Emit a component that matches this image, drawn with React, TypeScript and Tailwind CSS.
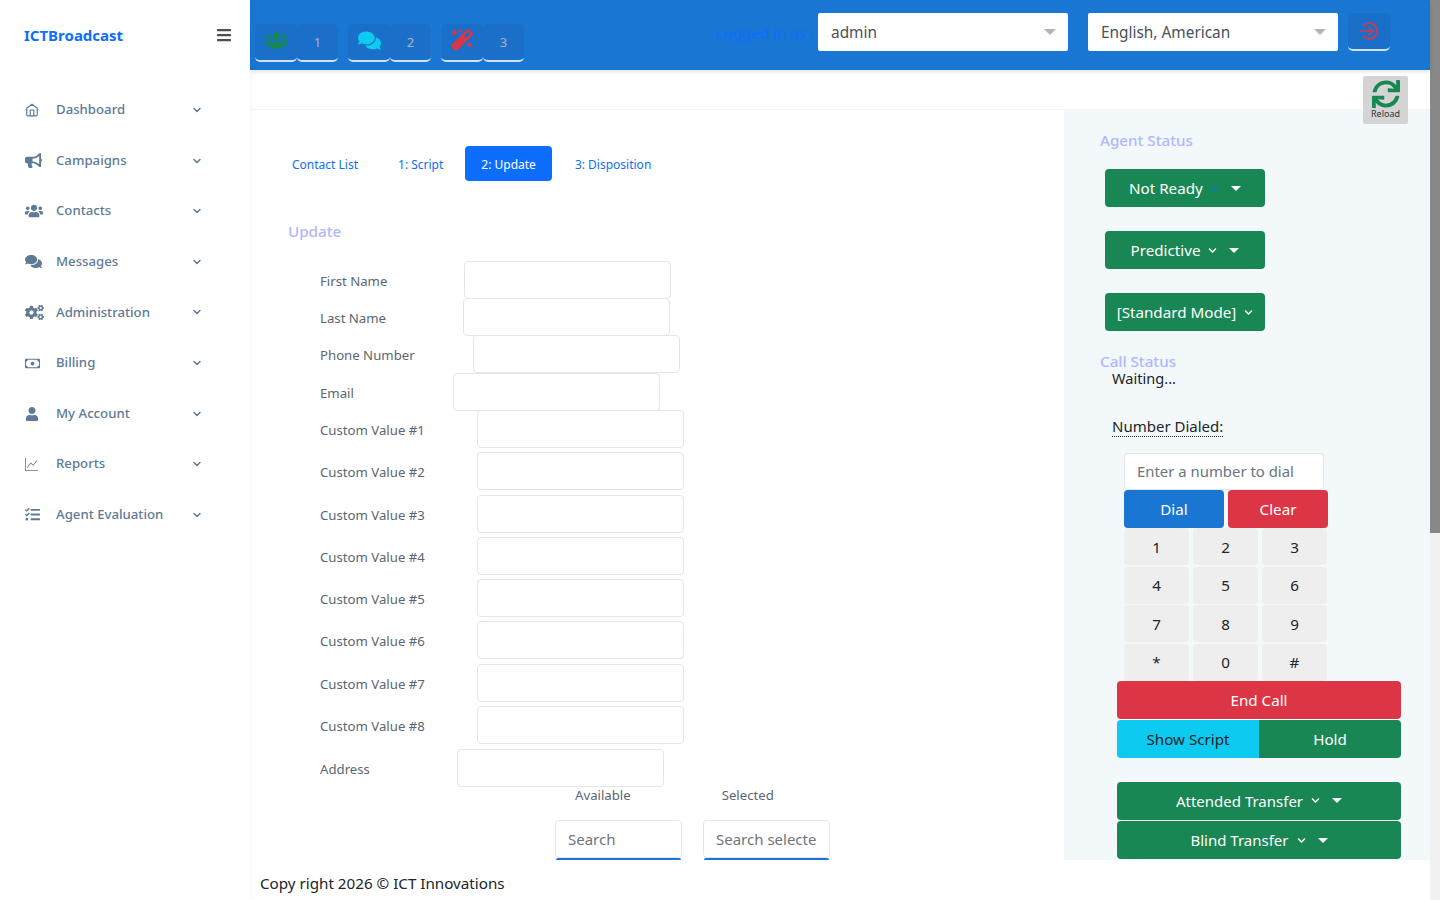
import { FaUsers, FaComments, FaMagic, FaBullhorn, FaCogs, FaUser, FaSync, FaTasks, FaBars, FaChevronDown } from 'react-icons/fa'
import { FiHome, FiChevronDown } from 'react-icons/fi'
import { BsCash, BsGraphUp } from 'react-icons/bs'
import { ReactNode } from 'react'

const font = "font-['Noto_Sans',sans-serif]"

const menu: { label: string; icon: ReactNode }[] = [
  { label: 'Dashboard', icon: <FiHome className="text-[14px]" /> },
  { label: 'Campaigns', icon: <FaBullhorn className="text-[17px]" /> },
  { label: 'Contacts', icon: <FaUsers className="text-[18px]" /> },
  { label: 'Messages', icon: <FaComments className="text-[17px]" /> },
  { label: 'Administration', icon: <FaCogs className="text-[19px]" /> },
  { label: 'Billing', icon: <BsCash className="text-[15px]" /> },
  { label: 'My Account', icon: <FaUser className="text-[14px]" /> },
  { label: 'Reports', icon: <BsGraphUp className="text-[13px]" /> },
  { label: 'Agent Evaluation', icon: <FaTasks className="text-[15px]" /> },
]

// offsets are uneven in the page itself
const fields: { label: string; ml: string; rowH: string }[] = [
  { label: 'First Name', ml: 'ml-[49px]', rowH: 'h-[37px]' },
  { label: 'Last Name', ml: 'ml-[48px]', rowH: 'h-[37px]' },
  { label: 'Phone Number', ml: 'ml-[58px]', rowH: 'h-[38px]' },
  { label: 'Email', ml: 'ml-[38px]', rowH: 'h-[37px]' },
  { label: 'Custom Value #1', ml: 'ml-[62px]', rowH: 'h-[42px]' },
  { label: 'Custom Value #2', ml: 'ml-[62px]', rowH: 'h-[43px]' },
  { label: 'Custom Value #3', ml: 'ml-[62px]', rowH: 'h-[42px]' },
  { label: 'Custom Value #4', ml: 'ml-[62px]', rowH: 'h-[42px]' },
  { label: 'Custom Value #5', ml: 'ml-[62px]', rowH: 'h-[42px]' },
  { label: 'Custom Value #6', ml: 'ml-[62px]', rowH: 'h-[43px]' },
  { label: 'Custom Value #7', ml: 'ml-[62px]', rowH: 'h-[42px]' },
  { label: 'Custom Value #8', ml: 'ml-[62px]', rowH: 'h-[43px]' },
  { label: 'Address', ml: 'ml-[42px]', rowH: 'h-[38px]' },
]

function Caret() {
  return <span className="inline-block w-0 h-0 border-x-[5px] border-x-transparent border-t-[5px] border-t-white" />
}

function Sidebar() {
  return (
    <aside className="w-[250px] shrink-0 bg-white flex flex-col relative z-20 shadow-[0_0_8px_rgba(0,0,0,0.05)]">
      <div className="h-[70px] flex items-center justify-between pl-[24px] pr-[18px]">
        <span className="text-[15px] font-bold text-[#0d6efd]">ICTBroadcast</span>
        <FaBars className="text-[#495057] text-[16px]" />
      </div>
      <ul className="mt-[14.8px] flex flex-col">
        {menu.map((m) => (
          <li key={m.label} className="h-[50.6px] flex items-center pl-[25px] pr-[47px] text-[#5e7a94] text-[13.2px] font-medium">
            <span className="w-[31px] flex items-center">{m.icon}</span>
            <span className="flex-1">{m.label}</span>
            <FiChevronDown className="text-[12px] stroke-[3px]" />
          </li>
        ))}
      </ul>
    </aside>
  )
}

function TopBtn({ icon, n }: { icon: ReactNode; n: number }) {
  return (
    <div className="flex h-[38px] text-[#a9b4c2] text-[13px]">
      <div className="w-[42px] bg-[#1a6fc9] rounded-[5px] border-b-[2px] border-[#cfe2f7] flex items-start justify-center pt-[5px]">{icon}</div>
      <div className="w-[41px] bg-[#1a6fc9] rounded-[5px] border-b-[2px] border-[#cfe2f7] flex items-center justify-center pt-[2px]">{n}</div>
    </div>
  )
}

function TopSelect({ value }: { value: string }) {
  return (
    <div className="w-[250px] h-[38px] bg-white rounded-[2px] flex items-center justify-between pl-[13px] pr-[12px] text-[#495057] text-[15.4px]">
      <span className="pt-[2px]">{value}</span>
      <span className="w-0 h-0 border-x-[6px] border-x-transparent border-t-[6px] border-t-[#adb5bd]" />
    </div>
  )
}

function LogoutIcon() {
  return (
    <svg viewBox="0 0 24 24" className="w-[20px] h-[20px] text-[#dc3545]" fill="none" stroke="currentColor" strokeWidth="2" strokeLinecap="round" strokeLinejoin="round">
      <path d="M5.5 5.5a9.5 9.5 0 1 1 0 13" />
      <path d="M2 12h14" />
      <path d="M12 7.5l4.5 4.5-4.5 4.5" />
    </svg>
  )
}

function Header() {
  return (
    <header className="h-[70px] shrink-0 bg-[#1976d2] shadow-[0_2px_4px_rgba(0,0,0,0.1)] flex items-start relative z-10">
      <div className="flex gap-[10px] ml-[5px] mt-[24px]">
        <TopBtn icon={<FaUsers className="text-[#198754] text-[23px]" />} n={1} />
        <TopBtn icon={<FaComments className="text-[#0dcaf0] text-[23px]" />} n={2} />
        <TopBtn icon={<FaMagic className="text-[#dc3545] text-[22px]" />} n={3} />
      </div>
      <span className="ml-[191px] mt-[21px] text-[15.2px] text-[#0d6efd] leading-[24px] w-[103px] whitespace-nowrap">Logged in as :</span>
      <div className="flex gap-[20px] mt-[13px]">
        <TopSelect value="admin" />
        <TopSelect value="English, American" />
      </div>
      <div className="ml-[10px] mt-[13px] w-[42px] h-[38px] bg-[#1a6fc9] rounded-[5px] border-b-[2px] border-[#cfe2f7] flex items-center justify-center">
        <LogoutIcon />
      </div>
    </header>
  )
}

function FormArea() {
  return (
    <section className="w-[814px] shrink-0 bg-white rounded-tr-[6px] pt-[36px] text-[13.2px] text-[#5c6670]">
      <div className="flex items-center h-[35px] ml-[26px] text-[#0d6efd] text-[12px]">
        <span className="px-[16px] pt-[2px]">Contact List</span>
        <span className="px-[16px] pt-[2px] ml-[8px]">1: Script</span>
        <span className="px-[16px] pt-[2px] ml-[6px] h-[35px] flex items-center bg-[#0d6efd] text-white rounded-[4px]">2: Update</span>
        <span className="px-[16px] pt-[2px] ml-[7px]">3: Disposition</span>
      </div>
      <h5 className="ml-[38px] mt-[38px] text-[15.2px] font-medium text-[#b1b6ff] leading-[24px]">Update</h5>
      <div className="mt-[17.5px]">
        {fields.map((f) => (
          <div key={f.label} className={`flex items-start pl-[70px] ${f.rowH}`}>
            <span className="w-[95px] whitespace-nowrap leading-[41px]">{f.label}</span>
            <div className={`w-[207px] h-[38px] shrink-0 bg-white border border-[#e4e7ea] rounded-[4px] ${f.ml}`} />
          </div>
        ))}
      </div>
      <div className="flex mt-[-1px] ml-[325px] gap-[91px]">
        <span>Available</span>
        <span>Selected</span>
      </div>
      <div className="flex mt-[15px] ml-[305px] gap-[21px]">
        {['Search', 'Search selected'].map((s) => (
          <div key={s} className="flex flex-col w-[127px]">
            <div className="h-[38px] bg-white border border-[#e4e7ea] rounded-[4px] flex items-center px-[12px] text-[15px] text-[#6c757d] overflow-hidden whitespace-nowrap">
              <span className="w-[102px] overflow-hidden">{s}</span>
            </div>
            <div className="h-[4px] mx-[1px] bg-[#1976d2] rounded-t-[2px]" />
          </div>
        ))}
      </div>
    </section>
  )
}

function GreenDrop({ label, w, size }: { label: string; w: string; size: string }) {
  return (
    <div className={`${w} ${size} h-[38px] bg-[#198754] rounded-[4px] text-white flex items-center justify-center`}>
      <span className="pt-[1px]">{label}</span>
      <FaChevronDown className="text-[9px] ml-[8px]" />
      <span className="ml-[12px] flex"><Caret /></span>
    </div>
  )
}

function RightPanel() {
  const keys = ['1', '2', '3', '4', '5', '6', '7', '8', '9', '*', '0', '#']
  return (
    <section className="flex-1 bg-[#f3f8fb] pt-[18px] pl-[36px] text-[15.2px] overflow-hidden">
      <h5 className="text-[15.2px] font-medium text-[#b1b6ff] leading-[24px]">Agent Status</h5>
      <div className="ml-[5px] mt-[17px] flex flex-col gap-[24px]">
        <div className="w-[160px] h-[38px] bg-[#198754] rounded-[4px] text-white flex items-center pl-[24px]">
          <span className="pt-[1px]">Not Ready</span>
          <FaChevronDown className="text-[9px] ml-[7px] text-[#0d6efd]" />
          <span className="ml-[12px] flex"><Caret /></span>
        </div>
        <GreenDrop label="Predictive" w="w-[160px]" size="text-[15.2px]" />
        <div className="w-[160px] h-[38px] bg-[#198754] rounded-[4px] text-white flex items-center justify-center">
          <span className="pt-[1px]">[Standard Mode]</span>
          <FaChevronDown className="text-[9px] ml-[8px]" />
        </div>
      </div>
      <h5 className="mt-[18px] text-[15.2px] font-medium text-[#b1b6ff] leading-[24px] h-[17px]">Call Status</h5>
      <div className="ml-[12px] text-[14.6px] text-[#212529] leading-[24px]">Waiting...</div>
      <div className="ml-[12px] mt-[24px] text-[15px] text-[#212529] leading-[24px]">
        <span className="border-b border-dotted border-[#212529]">Number Dialed:</span>
      </div>
      <div className="ml-[24px] mt-[15px] w-[200px] h-[37px] bg-white border border-[#e4e7ea] rounded-[4px] flex items-center px-[12px] text-[14.9px] text-[#6c757d] whitespace-nowrap overflow-hidden">Enter a number to dial</div>
      <div className="ml-[24px] flex gap-[4px]">
        <div className="w-[100px] h-[38px] bg-[#1976d2] rounded-[4px] text-white flex items-center justify-center">Dial</div>
        <div className="w-[100px] h-[38px] bg-[#dc3545] rounded-[4px] text-white flex items-center justify-center">Clear</div>
      </div>
      <div className="ml-[24px] grid grid-cols-[65px_65px_65px] gap-x-[4px] gap-y-[1.5px] w-[203px]">
        {keys.map((k) => (
          <div key={k} className="h-[37px] pt-[1px] bg-[#eeeeee] rounded-[4px] flex items-center justify-center text-[#212529]">{k}</div>
        ))}
      </div>
      <div className="ml-[17px] w-[284px]">
        <div className="h-[38px] bg-[#dc3545] rounded-[4px] text-white flex items-center justify-center pt-[1px]">End Call</div>
        <div className="flex h-[38px] mt-[1px]">
          <div className="flex-1 pt-[1px] bg-[#0dcaf0] rounded-l-[4px] text-[#212529] flex items-center justify-center">Show Script</div>
          <div className="flex-1 pt-[1px] bg-[#198754] rounded-r-[4px] text-white flex items-center justify-center">Hold</div>
        </div>
        <div className="mt-[24px] flex flex-col gap-[1.5px]">
          <GreenDrop label="Attended Transfer" w="w-full" size="text-[15px]" />
          <GreenDrop label="Blind Transfer" w="w-full" size="text-[15px]" />
        </div>
      </div>
    </section>
  )
}

export default function App() {
  return (
    <div className={`${font} flex h-[900px] w-[1440px] overflow-hidden bg-white`}>
      <Sidebar />
      <main className="flex-1 flex flex-col min-w-0 relative">
        <Header />
        <div className="h-[40px] shrink-0 bg-white border-b border-[#f4f4f4] flex justify-end pr-[22px]">
          {/* reload sits over the content edge */}
          <div className="relative z-20 mt-[6px] w-[45px] h-[48px] bg-[#d4d4d4] flex flex-col items-center pt-[4px] rounded-[2px]">
            <FaSync className="text-[#198754] text-[28px]" />
            <span className="text-[9px] leading-[12px] text-[#333]">Reload</span>
          </div>
        </div>
        <div className="h-[750px] shrink-0 flex overflow-hidden">
          <FormArea />
          <RightPanel />
        </div>
        <footer className="h-[40px] shrink-0 bg-white pl-[10px] pt-[11px] text-[15.2px] text-[#212529] leading-[24px]">Copy right 2026 © ICT Innovations</footer>
      </main>
      <div className="w-[10px] shrink-0 bg-[#f1f1f1]">
        <div className="h-[533px] bg-[#888888]" />
      </div>
    </div>
  )
}
